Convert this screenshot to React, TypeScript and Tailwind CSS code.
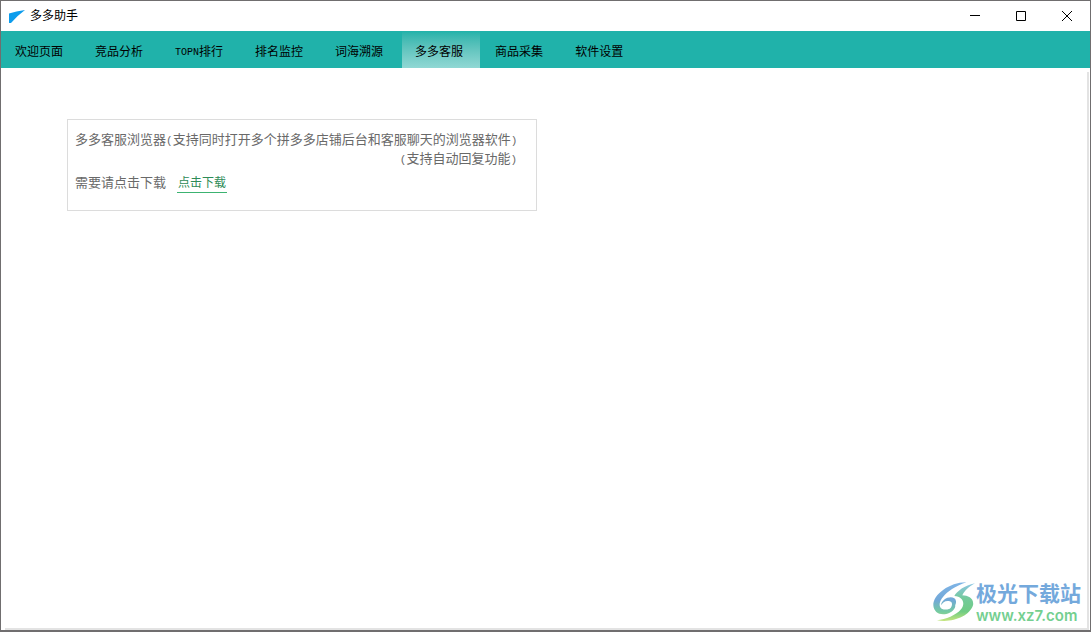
type Tab = {
  readonly latin?: string;
  readonly label: string;
};

const TABS: readonly Tab[] = [
  { label: '欢迎页面' },
  { label: '竞品分析' },
  { latin: 'TOPN', label: '排行' },
  { label: '排名监控' },
  { label: '词海溯源' },
  { label: '多多客服' },
  { label: '商品采集' },
  { label: '软件设置' },
];

const ACTIVE_TAB = '多多客服';

export default function App() {
  return (
    <div className="flex h-screen flex-col border border-b-2 border-[#706e6f] bg-white font-['Liberation_Mono','Noto_Sans_CJK_SC',monospace]">
      <TitleBar />
      <NavBar />
      <main className="mt-1 mr-px ml-1 flex-1 border-r-2 border-b-2 border-[#e3e3e3] pt-[47px] pl-[62px]">
        <DownloadCard />
      </main>
      <Watermark />
    </div>
  );
}

function TitleBar() {
  return (
    <header className="flex h-[30px] items-center pl-2 text-black">
      <svg className="mt-0.5 h-4 w-4" viewBox="0 0 16 16" aria-hidden="true">
        <path d="M0 4.5 Q7 2 16 1 Q9 6 2 14 L0 14 Z" fill="#0d9cec" />
      </svg>
      <h1 className="ml-[5px] pt-0.5 text-xs">多多助手</h1>
      <div className="ml-auto flex h-full">
        <WindowButton label="最小化">
          <path d="M0 4.5h10" />
        </WindowButton>
        <WindowButton label="最大化">
          <path d="M0.5 0.5h9v9h-9z" />
        </WindowButton>
        <WindowButton label="关闭">
          <path d="M0 0l10 10M10 0L0 10" />
        </WindowButton>
      </div>
    </header>
  );
}

function WindowButton({ label, children }: { label: string; children: React.ReactNode }) {
  return (
    <button type="button" aria-label={label} className="flex w-[46px] items-center justify-center">
      <svg className="h-2.5 w-2.5" viewBox="0 0 10 10" fill="none" stroke="#000" aria-hidden="true">
        {children}
      </svg>
    </button>
  );
}

function NavBar() {
  return (
    <nav className="flex h-[37px] gap-0.5 bg-[#20b2aa] pl-px text-xs text-black">
      {TABS.map((tab) => (
        <button
          key={tab.label}
          type="button"
          aria-current={tab.label === ACTIVE_TAB ? 'page' : undefined}
          className={`flex items-center pt-1.5 pr-[17px] pl-[13px] ${
            tab.label === ACTIVE_TAB ? 'bg-linear-to-b from-[#20b2aa] to-[#90d8d4]' : ''
          }`}
        >
          {tab.latin && <span className="text-[10px]">{tab.latin}</span>}
          {tab.label}
        </button>
      ))}
    </nav>
  );
}

function DownloadCard() {
  return (
    <section className="w-[470px] border border-[#dcdcdc] px-[7px] pt-[11px] pb-[17px] text-[13px] leading-[19px] text-[#696969]">
      <p className="whitespace-nowrap">
        多多客服浏览器<Paren>(</Paren>支持同时打开多个拼多多店铺后台和客服聊天的浏览器软件<Paren>)</Paren>
      </p>
      <p className="pr-3 text-right">
        <Paren>(</Paren>支持自动回复功能<Paren>)</Paren>
      </p>
      <p className="mt-[5px] flex items-start gap-[11px]">
        需要请点击下载
        <a
          href="#download"
          className="border-b border-[#3cb371] px-px pt-0.5 text-xs leading-4 text-[#2e8b57]"
        >
          点击下载
        </a>
      </p>
    </section>
  );
}

// Narrower than the surrounding text so a bracket takes half a character cell.
function Paren({ children }: { children: string }) {
  return <span className="text-[11px] leading-none">{children}</span>;
}

function Watermark() {
  return (
    <div className="absolute right-2.5 bottom-2 flex items-center">
      <svg className="h-[42px] w-[43px]" viewBox="18 15 129 126" aria-hidden="true">
        <defs>
          <linearGradient id="swoosh" gradientUnits="userSpaceOnUse" x1="0" y1="20" x2="0" y2="136">
            <stop offset="0" stopColor="#7fb4e6" />
            <stop offset="0.45" stopColor="#72a8d8" />
            <stop offset="0.75" stopColor="#74cba0" />
            <stop offset="1" stopColor="#b4e07c" />
          </linearGradient>
          <linearGradient id="sweep" gradientUnits="userSpaceOnUse" x1="0" y1="20" x2="0" y2="136">
            <stop offset="0" stopColor="#8cc4e8" />
            <stop offset="0.4" stopColor="#74ca9c" />
            <stop offset="0.75" stopColor="#70cc84" />
            <stop offset="1" stopColor="#c8e67c" />
          </linearGradient>
        </defs>
        <path
          d="M118 19C70 18 18 55 19 88C20 112 45 122 68 110C84 102 90 88 80 80C84 95 60 106 44 98C26 85 50 42 118 19z"
          fill="url(#swoosh)"
        />
        <path
          d="M42 88C44 70 68 58 82 67C94 76 84 98 66 102C78 90 78 77 66 75C54 73 47 80 42 88z"
          fill="url(#swoosh)"
        />
        <path
          d="M144 22C112 28 90 46 82 60C108 62 116 82 102 100C88 118 56 130 30 133C76 142 128 120 138 88C142 68 124 58 106 58C112 46 122 34 144 22z"
          fill="url(#sweep)"
        />
      </svg>
      <div className="flex flex-col gap-[3px]">
        <div className="font-['Noto_Sans_CJK_SC',sans-serif] text-[21px] leading-[26px] font-bold text-[#74a9dc]">
          极光下载站
        </div>
        <div className="font-[Inter,sans-serif] text-[15px] leading-4 font-semibold text-[#74cf90]">
          www.xz7.com
        </div>
      </div>
    </div>
  );
}
